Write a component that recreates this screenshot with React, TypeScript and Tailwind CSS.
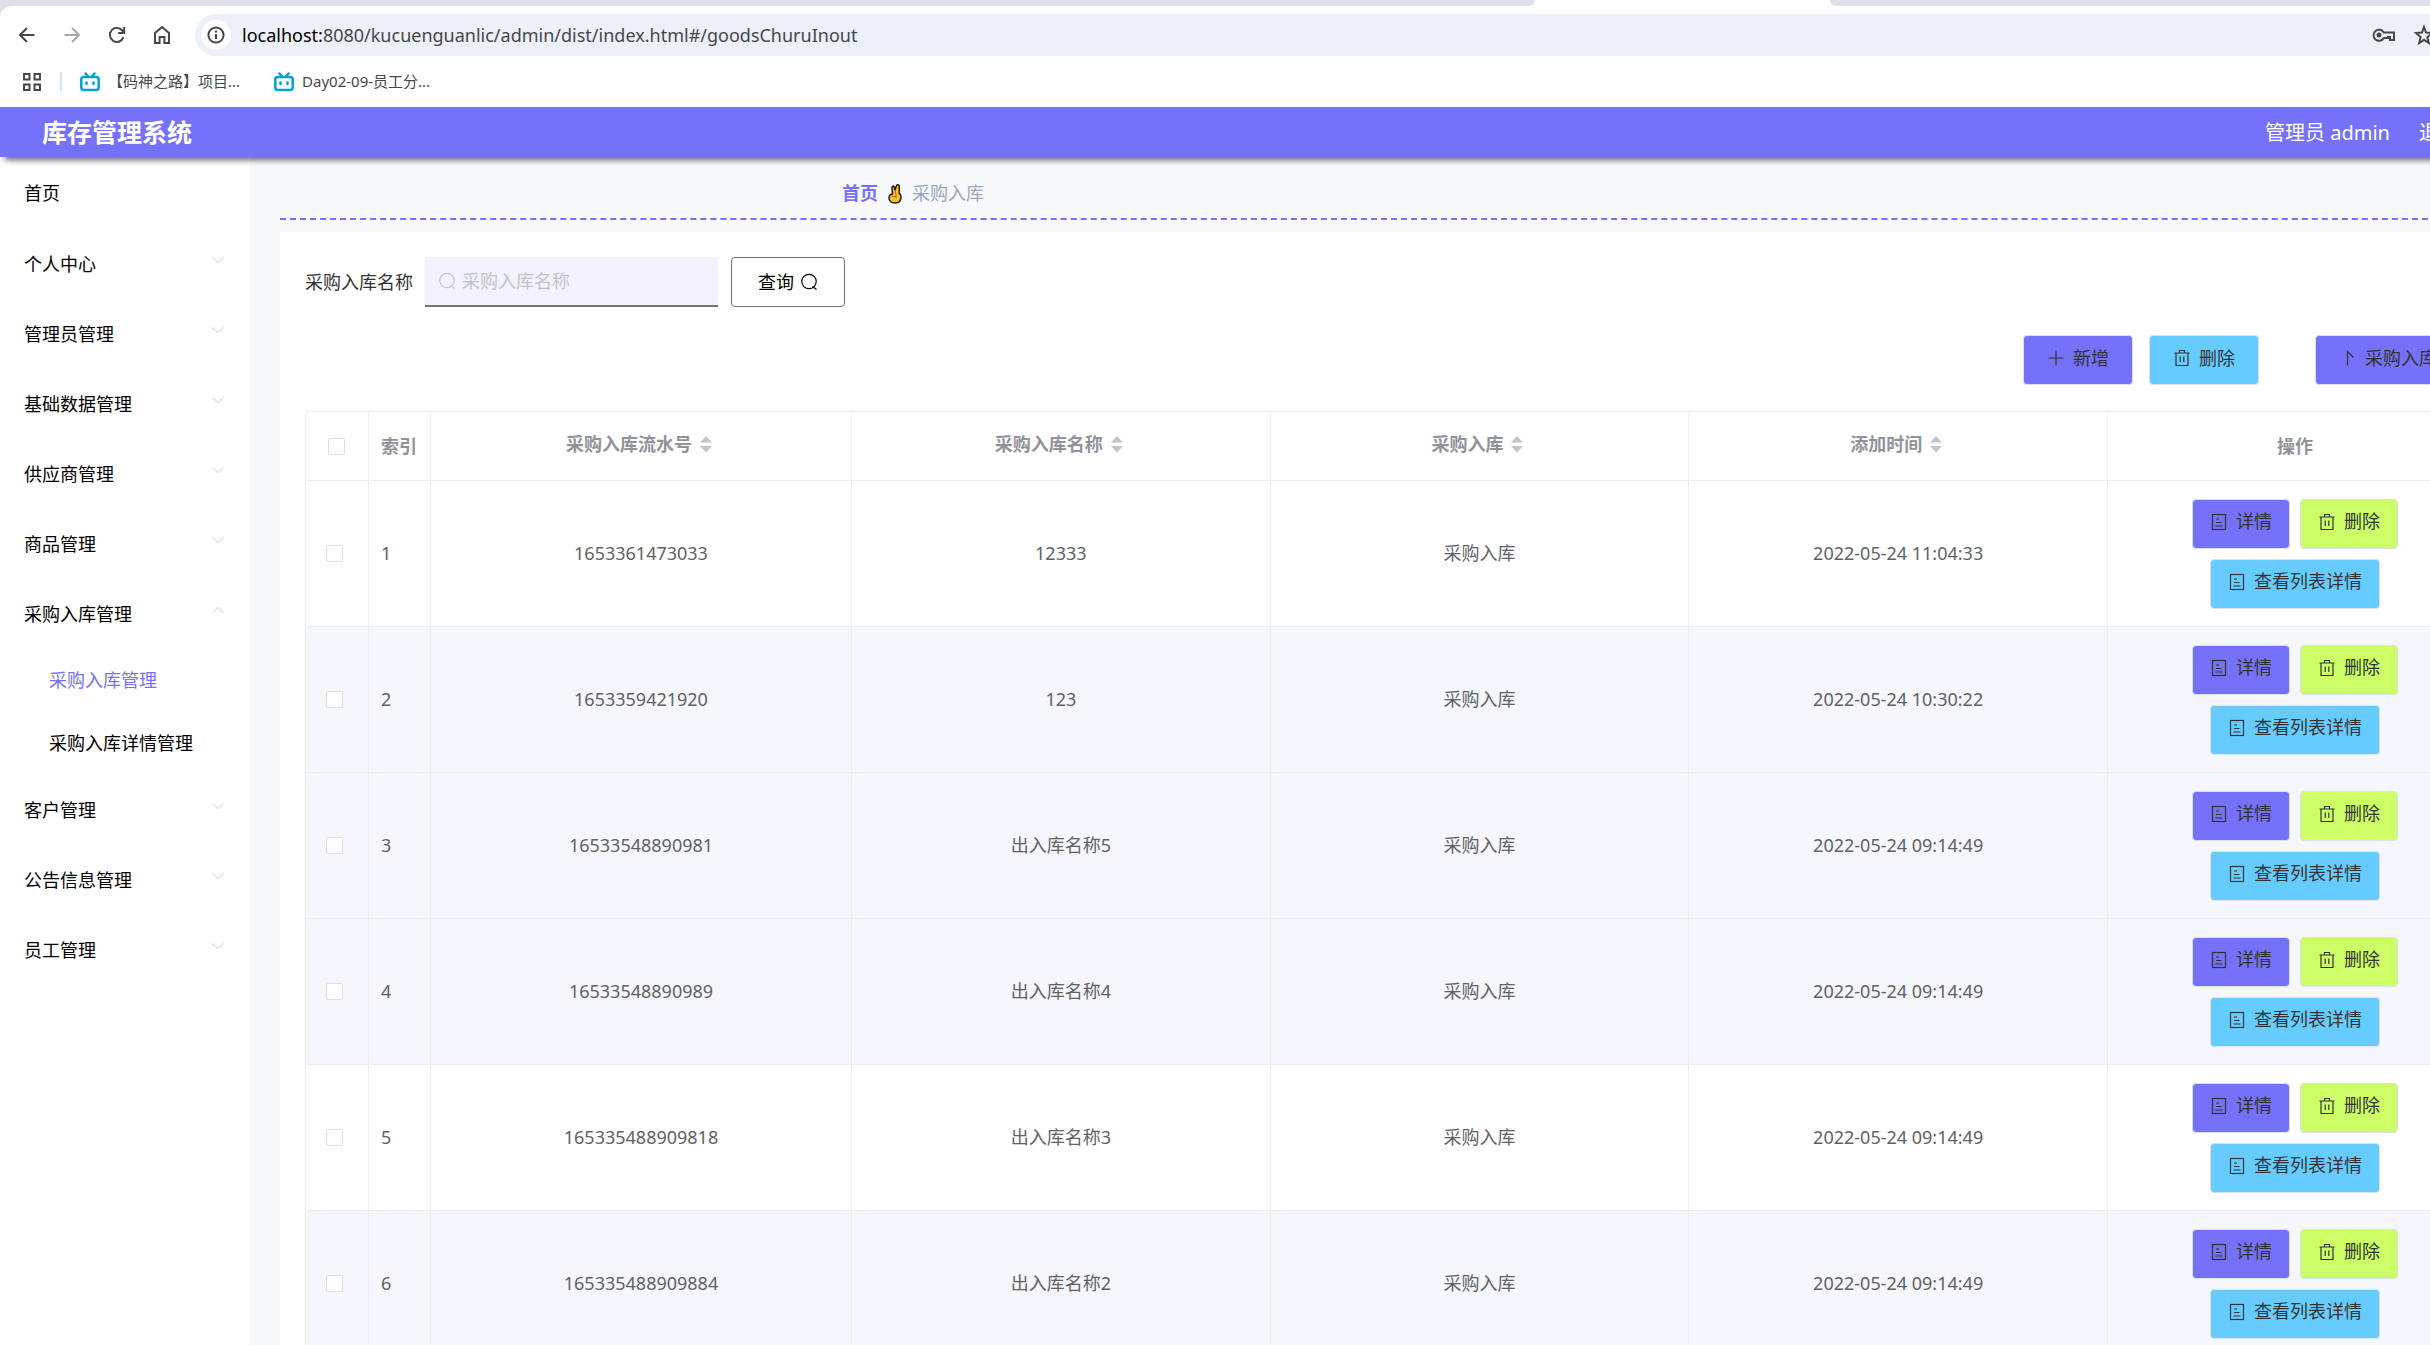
import { ReactNode, useState } from "react";
import clsx from "clsx";

type MenuItem = {
  title: string;
  children?: string[];
  open?: boolean;
};

type RecordTypes = {
  id: number;
  serial: string;
  name: string;
  type: string;
  time: string;
};

const MENUS: MenuItem[] = [
  { title: "个人中心" },
  { title: "管理员管理" },
  { title: "基础数据管理" },
  { title: "供应商管理" },
  { title: "商品管理" },
  {
    title: "采购入库管理",
    children: ["采购入库管理", "采购入库详情管理"],
    open: true,
  },
  { title: "客户管理" },
  { title: "公告信息管理" },
  { title: "员工管理" },
];

const RECORDS: RecordTypes[] = [
  { id: 1, serial: "1653361473033", name: "12333", type: "采购入库", time: "2022-05-24 11:04:33" },
  { id: 2, serial: "1653359421920", name: "123", type: "采购入库", time: "2022-05-24 10:30:22" },
  { id: 3, serial: "16533548890981", name: "出入库名称5", type: "采购入库", time: "2022-05-24 09:14:49" },
  { id: 4, serial: "16533548890989", name: "出入库名称4", type: "采购入库", time: "2022-05-24 09:14:49" },
  { id: 5, serial: "165335488909818", name: "出入库名称3", type: "采购入库", time: "2022-05-24 09:14:49" },
  { id: 6, serial: "165335488909884", name: "出入库名称2", type: "采购入库", time: "2022-05-24 09:14:49" },
];

const COLUMNS = ["采购入库流水号", "采购入库名称", "采购入库", "添加时间"];

const BackIcon = ({ className }: { className?: string }) => (
  <svg viewBox="0 0 20 20" className={clsx("size-5", className)} fill="none" stroke="currentColor" strokeWidth="2">
    <path d="M17.500 10H3.500M10 3l-7 7 7 7" />
  </svg>
);

const ReloadIcon = () => (
  <svg viewBox="0 0 20 20" className="size-5" fill="none" stroke="currentColor" strokeWidth="2">
    <path d="M16.500 12.200A7 7 0 1 1 15.600 5.800L17 7.400" />
    <path d="M17.200 2v6h-6" />
  </svg>
);

const HomeIcon = () => (
  <svg viewBox="0 0 20 20" className="size-5" fill="none" stroke="currentColor" strokeWidth="2">
    <path d="M3 18V8l7-6 7 6v10h-4.600v-6H7.600v6z" />
  </svg>
);

const InfoIcon = () => (
  <svg viewBox="0 0 20 20" className="size-5" fill="none" stroke="currentColor" strokeWidth="2">
    <circle cx="10" cy="10" r="7.600" />
    <path d="M10 9v5M10 5.500v2" />
  </svg>
);

const AppsIcon = () => (
  <svg viewBox="0 0 20 20" className="size-5" fill="none" stroke="currentColor" strokeWidth="2">
    <path d="M2 2h5.500v5.500H2zM12.500 2H18v5.500h-5.500zM2 12.500h5.500V18H2zM12.500 12.500H18V18h-5.500z" />
  </svg>
);

const KeyIcon = () => (
  <svg viewBox="0 0 24 16" className="h-4 w-6" fill="none" stroke="currentColor" strokeWidth="2">
    <path d="M11.800 5.500H22v7.500h-4v-3h-2v1h-4.200a5.500 5.500 0 1 1 0-5.500z" />
    <circle cx="7" cy="8" r="2.500" fill="currentColor" stroke="none" />
  </svg>
);

const StarIcon = () => (
  <svg viewBox="0 0 24 24" className="size-6" fill="none" stroke="currentColor" strokeWidth="2">
    <path d="M12 4l2 5.500 6 .5-4.600 4 1.400 6L12 16.800 7.200 20l1.400-6L4 10l6-.5z" />
  </svg>
);

const BilibiliIcon = () => (
  <svg viewBox="0 0 20 20" className="size-5" fill="none" stroke="#00a1d6" strokeWidth="2.500" strokeLinecap="round">
    <path d="M5.500 1.500L8 4.500M14.500 1.500L12 4.500" />
    <rect x="1.300" y="5" width="17.400" height="13" rx="2.500" />
    <path d="M6.500 10.500v1.500M13.500 10.500v1.500" />
  </svg>
);

const HandIcon = () => (
  <svg viewBox="0 0 14 20" className="h-5 w-[14px]" fill="#fbc02d" stroke="#1a1a1a" strokeWidth="1.500" strokeLinejoin="round">
    <path d="M4.500 10L4 3.500c0-2 2-2 2.400-.3L7 6l1.300-4c.5-1.700 3-1.500 3 .5v7c1.400.8 1.700 2 1.700 3.500 0 3.500-2 6-6 6s-6-2.500-6-5c0-1.800.8-3.500 3.500-4z" />
    <path d="M7 6l.5 3.500M4 12.500h4M8 9.500v5" fill="none" stroke="#b26a00" strokeWidth="1" />
  </svg>
);

const Chevron = ({ up }: { up?: boolean }) => (
  <svg viewBox="0 0 12 12" className="mb-2 size-3" fill="none" stroke="#e0e0ef" strokeWidth="1.300">
    <path d={up ? "M0.500 8.500L6 3.500l5.500 5" : "M0.500 3.500L6 8.500l5.500-5"} />
  </svg>
);

const SearchIcon = () => (
  <svg viewBox="0 0 18 18" className="size-[18px] shrink-0" fill="none" stroke="currentColor" strokeWidth="1.200">
    <circle cx="9" cy="8.500" r="7.200" />
    <path d="M12.500 13.500l4 3" />
  </svg>
);

const DocIcon = () => (
  <svg viewBox="0 0 18 18" className="size-[18px] shrink-0" fill="none" stroke="currentColor" strokeWidth="1.200">
    <rect x="2.500" y="1.500" width="13" height="15" />
    <path d="M6 6h3M6 9.500h5.500M5.500 13h7" />
  </svg>
);

const TrashIcon = () => (
  <svg viewBox="0 0 18 18" className="size-[18px] shrink-0" fill="none" stroke="currentColor" strokeWidth="1.200">
    <path d="M1.500 4h15M3 4v12.500h12V4M6.500 4V1.500h5V4M7.200 7.500v5.500M10.800 7.500v5.500" />
  </svg>
);

const PlusIcon = () => (
  <svg viewBox="0 0 18 18" className="size-[18px] shrink-0" fill="none" stroke="currentColor" strokeWidth="1.200">
    <path d="M9 1.500v15M1.500 9h15" />
  </svg>
);

const TopIcon = () => (
  <svg viewBox="0 0 18 18" className="size-[18px] shrink-0" fill="none" stroke="currentColor" strokeWidth="1.200">
    <path d="M8.500 16.500v-14l6 6" />
  </svg>
);

const SortIcon = () => (
  <svg viewBox="0 0 12 18" className="ml-2 h-[18px] w-3" fill="#c0c4cc">
    <path d="M6 1l6 6.500H0zM6 17.500L0 11h12z" />
  </svg>
);

const ActionButton = ({
  icon,
  text,
  color,
  className,
}: {
  icon: ReactNode;
  text: string;
  color: string;
  className?: string;
}) => (
  <button
    className={clsx(
      "flex h-[50px] items-center gap-2 rounded border border-[#dcdfe6] pb-1 text-[#333333]",
      color,
      className
    )}
  >
    {icon}
    <span className="whitespace-nowrap">{text}</span>
  </button>
);

const CheckBox = ({ label }: { label: string }) => (
  <input
    type="checkbox"
    aria-label={label}
    className="block size-[17px] appearance-none rounded-xs border border-[#dcdfe6] bg-white checked:bg-[#7571f9]"
  />
);

const BrowserBar = () => (
  <div className="bg-[#dee1ea] text-[#474747]">
    <div className="flex h-[6px] bg-white">
      <div className="w-[1535px] rounded-br-lg bg-[#dee1ea]" />
      <div className="w-[295px]" />
      <div className="flex-1 rounded-bl-lg bg-[#dee1ea]" />
    </div>
    <div className="rounded-tl-xl bg-white">
      <div className="flex items-center pt-2">
        <div className="flex w-[195px] items-center gap-[25px] pl-[17px]">
          <button aria-label="back">
            <BackIcon />
          </button>
          <button aria-label="forward">
            <BackIcon className="rotate-180 text-[#a9a9a9]" />
          </button>
          <button aria-label="reload">
            <ReloadIcon />
          </button>
          <button aria-label="home">
            <HomeIcon />
          </button>
        </div>
        <div className="flex h-[42px] flex-1 items-center gap-[11px] rounded-l-full bg-[#ecf0f9] pl-[6px]">
          <span className="flex size-[30px] items-center justify-center rounded-full bg-white">
            <InfoIcon />
          </span>
          <p className="text-[18px] leading-6">
            <span className="text-black">localhost:</span>
            8080/kucuenguanlic/admin/dist/index.html#/goodsChuruInout
          </p>
          <div className="ml-auto flex w-[166px] items-center gap-4">
            <KeyIcon />
            <StarIcon />
          </div>
        </div>
      </div>
      <div className="flex h-[51px] items-center pl-[22px] text-[15px]">
        <AppsIcon />
        <span className="ml-[18px] h-[19px] w-[2px] bg-[#d3e3fd]" />
        <a href="#" className="ml-[18px] flex items-center gap-2">
          <BilibiliIcon />
          【码神之路】项目...
        </a>
        <a href="#" className="ml-[34px] flex items-center gap-2">
          <BilibiliIcon />
          Day02-09-员工分...
        </a>
      </div>
    </div>
  </div>
);

const SideMenu = () => (
  <nav className="w-[250px] shrink-0 bg-white pt-1 text-[18px] text-black">
    <a href="#" className="mb-[3px] flex h-[65px] items-center pl-6">
      首页
    </a>
    {MENUS.map((menu) => (
      <div key={menu.title}>
        <button className="flex h-[70px] w-full items-center justify-between pr-[26px] pl-6">
          {menu.title}
          <Chevron up={menu.open} />
        </button>
        {menu.open &&
          menu.children?.map((child, index) => (
            <a
              key={child}
              href="#"
              className={clsx("flex h-[63px] items-center pl-[49px]", index === 0 && "text-[#7571f9]")}
            >
              {child}
            </a>
          ))}
      </div>
    ))}
  </nav>
);

const RecordTable = () => (
  <table className="w-full table-fixed border-collapse border border-[#ebeef5] text-[18px] text-[#606266]">
    <colgroup>
      <col className="w-[63px]" />
      <col className="w-[62px]" />
      <col className="w-[421px]" />
      <col />
      <col />
      <col />
      <col className="w-[375px]" />
    </colgroup>
    <thead>
      <tr className="h-[69px] text-[#909399]">
        <th className="border border-[#ebeef5] pl-[22px]">
          <CheckBox label="全选" />
        </th>
        <th className="border border-[#ebeef5] pl-3 text-left">索引</th>
        {COLUMNS.map((column) => (
          <th key={column} className="border border-[#ebeef5] pr-1 pb-1">
            <div className="flex items-center justify-center">
              {column}
              <SortIcon />
            </div>
          </th>
        ))}
        <th className="border border-[#ebeef5]">操作</th>
      </tr>
    </thead>
    <tbody>
      {RECORDS.map((record) => (
        <tr
          key={record.id}
          className={clsx("h-[146px] text-center", record.id !== 1 && record.id !== 5 && "bg-[#f5f7fa]")}
        >
          <td className="border border-[#ebeef5] pl-5">
            <CheckBox label={record.serial} />
          </td>
          <td className="border border-[#ebeef5] pl-3 text-left">{record.id}</td>
          <td className="border border-[#ebeef5]">{record.serial}</td>
          <td className="border border-[#ebeef5]">{record.name}</td>
          <td className="border border-[#ebeef5]">{record.type}</td>
          <td className="border border-[#ebeef5]">{record.time}</td>
          <td className="border border-[#ebeef5]">
            <div className="flex flex-wrap justify-center gap-[10px]">
              <ActionButton icon={<DocIcon />} text="详情" color="bg-[#7571f9]" className="px-[17px]" />
              <ActionButton icon={<TrashIcon />} text="删除" color="bg-[#ccff66]" className="px-[17px]" />
              <ActionButton icon={<DocIcon />} text="查看列表详情" color="bg-[#66ccff]" className="px-[17px]" />
            </div>
          </td>
        </tr>
      ))}
    </tbody>
  </table>
);

export default function App() {
  const [keyword, setKeyword] = useState("");

  return (
    <div className="h-screen overflow-hidden bg-white font-['Noto_Sans','Noto_Sans_CJK_SC',sans-serif]">
      <div className="min-w-[2538px]">
        <BrowserBar />

        <header className="relative flex h-[50px] items-center justify-between bg-[#7571f9] pt-[2px] pl-[42px] text-white shadow-[3px_5px_6px_-2px_#00000099]">
          <h1 className="text-[25px] font-bold">库存管理系统</h1>
          <div className="flex w-[273px] gap-[29px] text-[20px]">
            <span>管理员 admin</span>
            <a href="#">退出登录</a>
          </div>
        </header>

        <div className="flex">
          <SideMenu />

          <main className="flex-1 bg-[#f7f8fa] px-[30px] text-[18px]">
            <div className="flex h-[63px] items-center gap-[10px] border-b-2 border-dashed border-[#7571f9] pt-3 pl-[562px]">
              <a href="#" className="font-bold text-[#7571f9]">
                首页
              </a>
              <HandIcon />
              <span className="text-[#97a8be]">采购入库</span>
            </div>

            <section className="mt-3 bg-white p-[25px]">
              <form className="flex items-center">
                <label htmlFor="keyword" className="w-[120px] text-[#333333]">
                  采购入库名称
                </label>
                <div className="flex h-[50px] w-[293px] items-center gap-[6px] border-b-2 border-[#737373] bg-[#f4f2ff] pl-[13px] text-[#c0c4cc]">
                  <SearchIcon />
                  <input
                    id="keyword"
                    value={keyword}
                    onChange={(e) => setKeyword(e.target.value)}
                    placeholder="采购入库名称"
                    className="min-w-0 flex-1 bg-transparent text-[#606266] outline-none placeholder:text-[#c0c4cc]"
                  />
                </div>
                <button
                  type="button"
                  className="ml-[13px] flex h-[50px] w-[114px] items-center justify-center gap-[6px] rounded border border-[#737373] text-black"
                >
                  查询
                  <SearchIcon />
                </button>
              </form>

              <div className="mt-7 mb-[26px] flex justify-end">
                <ActionButton icon={<PlusIcon />} text="新增" color="bg-[#7571f9]" className="px-[23px]" />
                <ActionButton icon={<TrashIcon />} text="删除" color="bg-[#66ccff]" className="ml-4 px-[23px]" />
                <ActionButton
                  icon={<TopIcon />}
                  text="采购入库"
                  color="bg-[#7571f9]"
                  className="ml-14 w-[168px] px-[23px]"
                />
              </div>

              <RecordTable />
            </section>
          </main>
        </div>
      </div>
    </div>
  );
}
